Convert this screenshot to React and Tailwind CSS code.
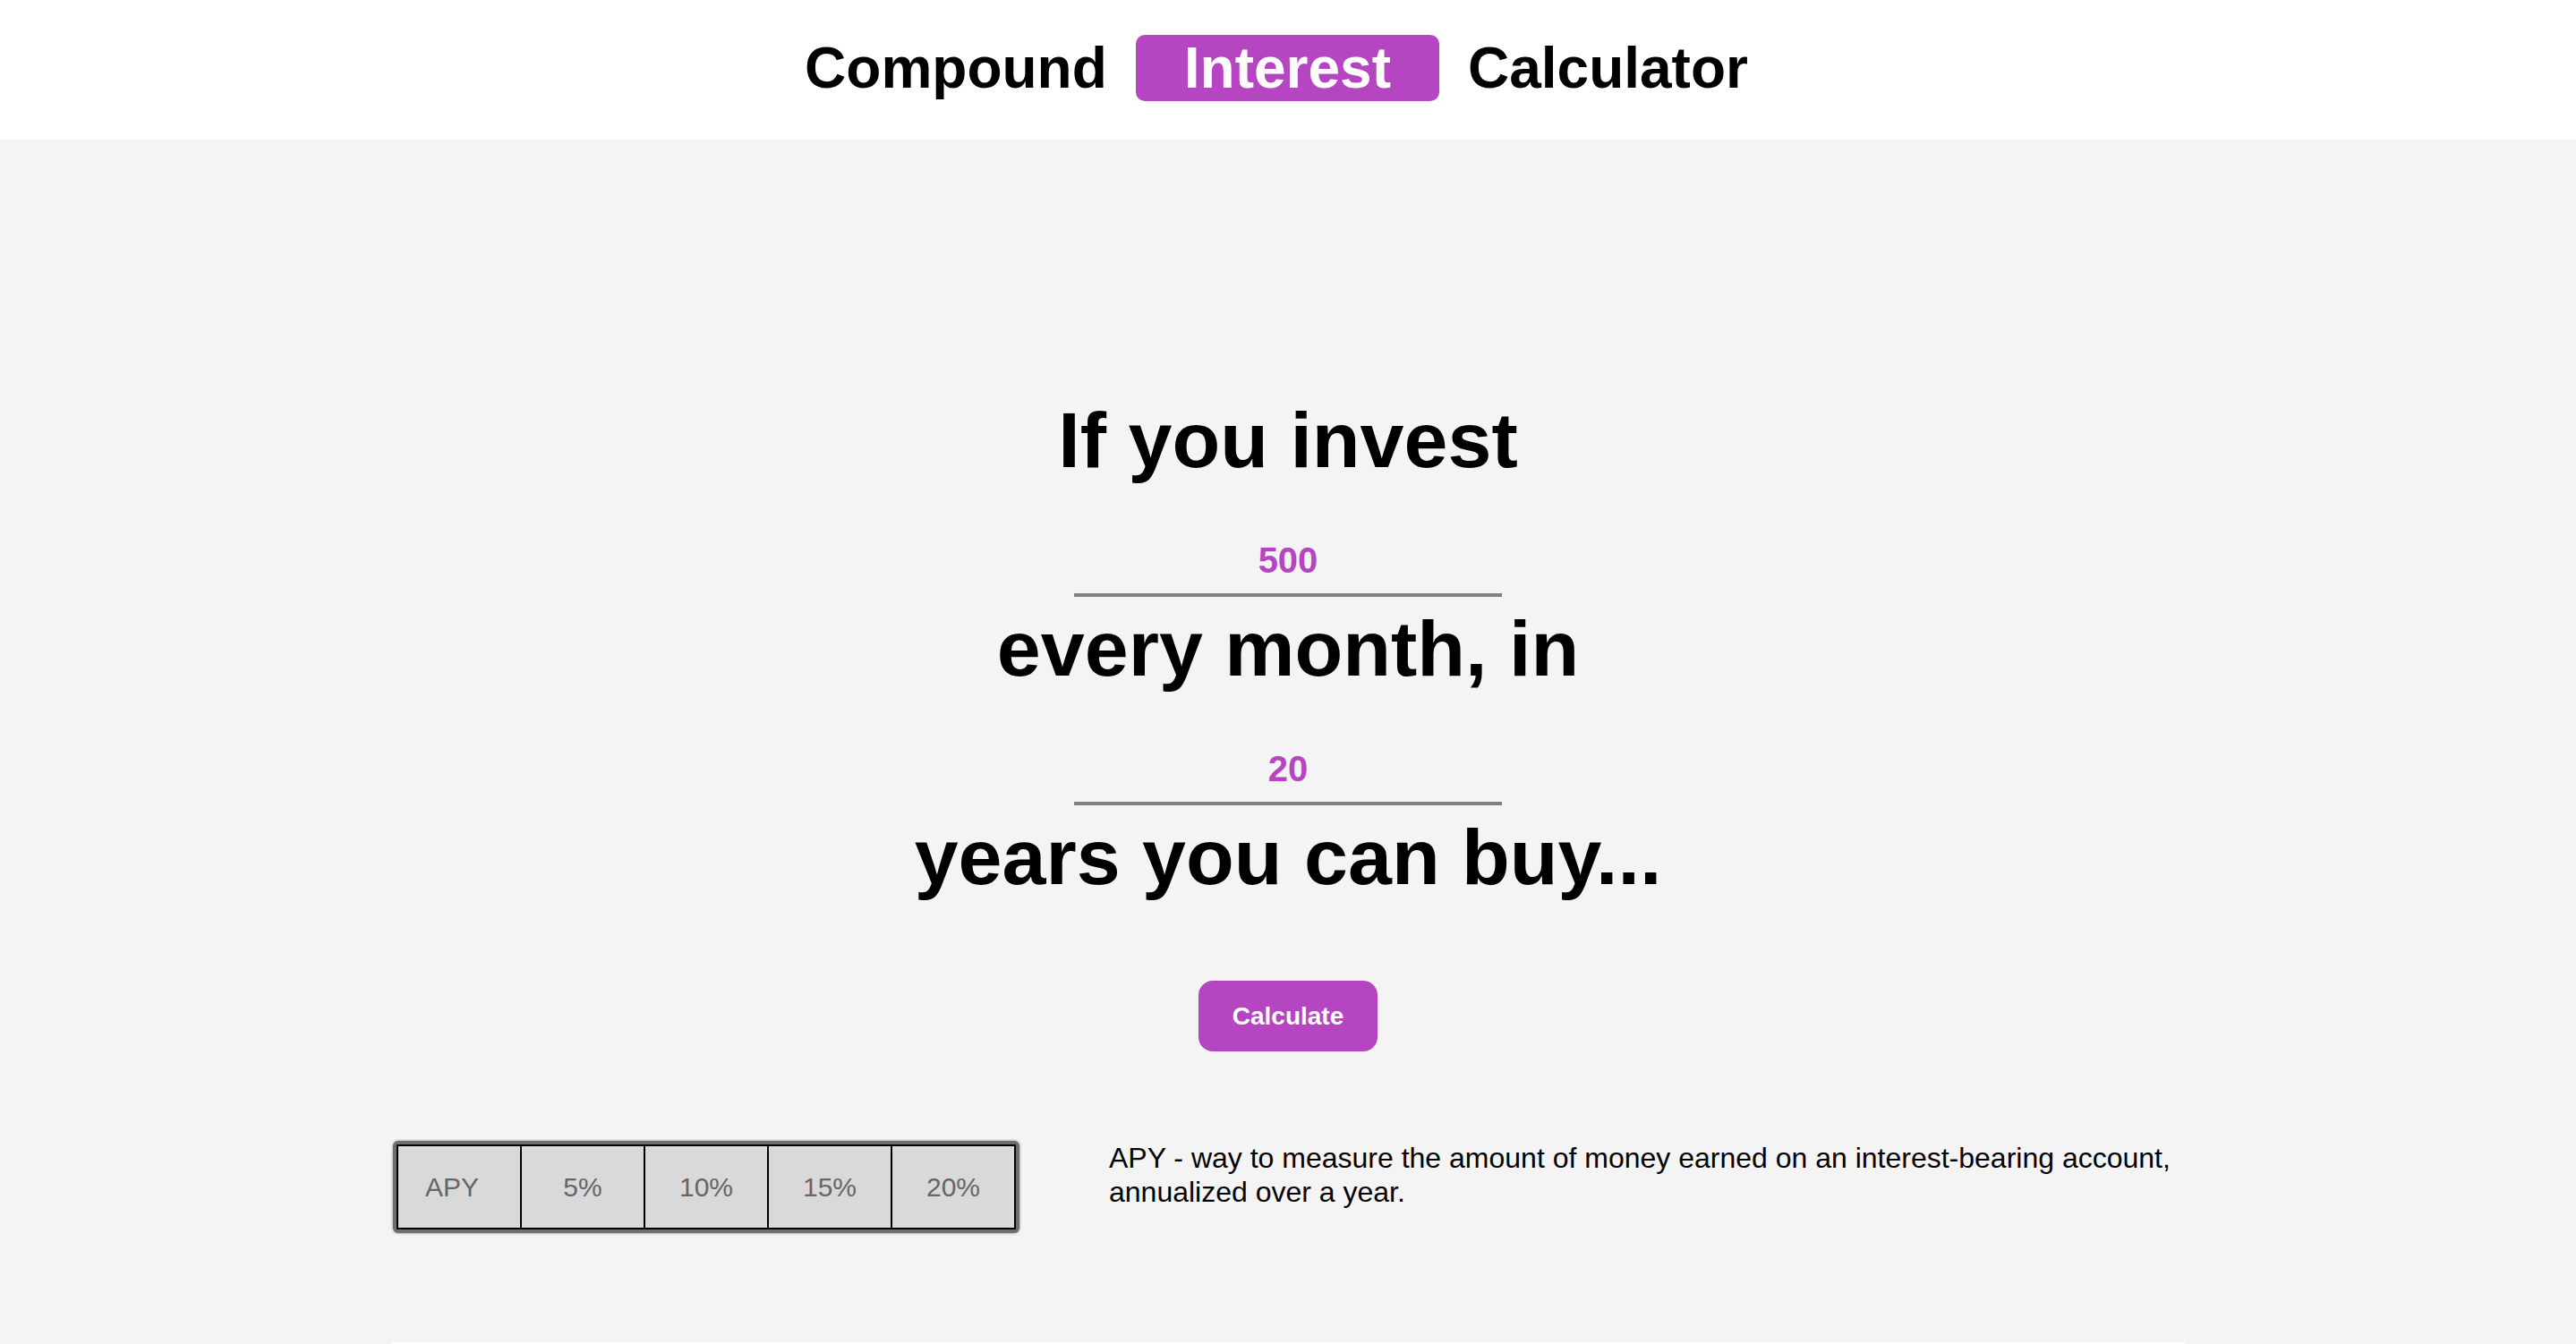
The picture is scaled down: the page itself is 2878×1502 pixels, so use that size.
import React, { useState } from "react";

const rates = ["APY", "5%", "10%", "15%", "20%"];

const App = () => {
  const [amount, setAmount] = useState("500");
  const [years, setYears] = useState("20");

  return (
    <div className="min-h-screen bg-[#f4f4f4] font-['Liberation_Sans',Arial,sans-serif] text-black">
      <header className="h-[156px] bg-white flex items-center justify-center gap-[32px] pr-[26px] pb-[4px] text-[64px] font-bold leading-[74px]">
        <span>Compound</span>
        <span className="bg-[#b545c1] text-white rounded-[10px] px-[54px]">Interest</span>
        <span>Calculator</span>
      </header>

      <main className="flex flex-col items-center pt-[286px]">
        <h2 className="text-[88px] font-bold leading-[100px]">If you invest</h2>
        <input
          className="mt-[60px] w-[478px] h-[65px] pb-[13px] border-b-4 border-[#808080] bg-transparent text-center text-[40px] leading-[48px] font-bold text-[#b545c1] outline-none"
          type="text"
          value={amount}
          onChange={(e) => setAmount(e.target.value)}
        />
        <h2 className="mt-[8px] text-[88px] font-bold leading-[100px]">every month, in</h2>
        <input
          className="mt-[60px] w-[478px] h-[65px] pb-[13px] border-b-4 border-[#808080] bg-transparent text-center text-[40px] leading-[48px] font-bold text-[#b545c1] outline-none"
          type="text"
          value={years}
          onChange={(e) => setYears(e.target.value)}
        />
        <h2 className="mt-[8px] text-[88px] font-bold leading-[100px]">years you can buy...</h2>

        <button className="mt-[88px] w-[200px] h-[79px] rounded-[16px] bg-[#b545c1] text-white text-[28px] font-bold">
          Calculate
        </button>

        <div className="mt-[100px] flex items-start gap-[100px]">
          <div className="bg-[#6e6e6e] p-[4px] rounded-[6px] shadow-[0_0_3px_#777]">
            <table className="border-collapse border-2 border-black">
              <tbody>
                <tr>
                  <td className="w-[138px] h-[93px] pr-[16px] border-2 border-black bg-[#d9d9d9] text-center text-[30px] text-[#666666]">
                    APY
                  </td>
                  {rates.slice(1).map((r) => (
                    <td
                      key={r}
                      className="w-[138px] h-[93px] border-2 border-black bg-[#d9d9d9] text-center text-[30px] text-[#666666]"
                    >
                      {r}
                    </td>
                  ))}
                </tr>
              </tbody>
            </table>
          </div>
          <p className="w-[1200px] text-[32px] leading-[38px]">
            APY - way to measure the amount of money earned on an interest-bearing account, annualized over a year.
          </p>
        </div>

        <div className="mt-[122px] w-[2004px] h-[200px] bg-white"></div>
      </main>
    </div>
  );
};

export default App;
